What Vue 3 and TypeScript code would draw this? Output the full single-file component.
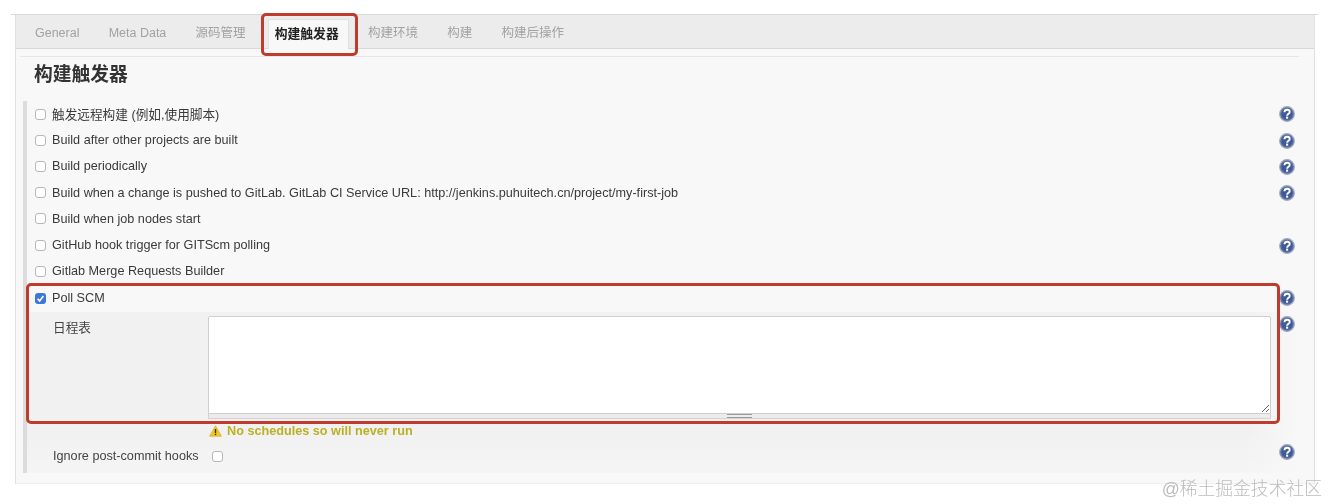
<script setup lang="ts">
interface Row { label: string; help: boolean }
const tabs: string[] = ['General', 'Meta Data', '源码管理', '构建触发器', '构建环境', '构建', '构建后操作']
const activeTab = '构建触发器'
const rows: Row[] = [
  { label: '触发远程构建 (例如,使用脚本)', help: true },
  { label: 'Build after other projects are built', help: true },
  { label: 'Build periodically', help: true },
  { label: 'Build when a change is pushed to GitLab. GitLab CI Service URL: http://jenkins.puhuitech.cn/project/my-first-job', help: true },
  { label: 'Build when job nodes start', help: false },
  { label: 'GitHub hook trigger for GITScm polling', help: true },
  { label: 'Gitlab Merge Requests Builder', help: false }
]
</script>

<template>
  <div class="page">
    <svg class="defs" width="0" height="0" aria-hidden="true">
      <symbol id="help" viewBox="0 0 16 16">
        <circle cx="8" cy="8" r="7.4" fill="#5f74a6" stroke="#a4aec4" stroke-width="1.1" />
        <circle cx="8" cy="8" r="5.6" fill="#3f5a96" />
        <path d="M5.4 6.2c.1-1.5 1.2-2.5 2.7-2.5 1.6 0 2.6 1 2.6 2.2 0 1.9-2.5 1.9-2.6 3.8" fill="none" stroke="#fff" stroke-width="1.9" />
        <rect x="7.05" y="10.6" width="2.1" height="2.1" fill="#fff" />
      </symbol>
    </svg>

    <div class="rule-top"></div>
    <div class="panel">
      <div class="tabbar">
        <div v-for="tab in tabs" :key="tab" class="tab" :class="{ active: tab === activeTab }">{{ tab }}</div>
      </div>
      <div class="tab-rule"></div>
      <h2 class="title">构建触发器</h2>

      <div class="section">
        <div v-for="row in rows" :key="row.label" class="row">
          <label class="check-label"><span class="cb"></span><span class="txt">{{ row.label }}</span></label>
          <svg v-if="row.help" class="help"><use href="#help" /></svg>
        </div>

        <div class="row poll">
          <label class="check-label">
            <span class="cb checked">
              <svg viewBox="0 0 11 11" width="11" height="11"><path d="M2.6 5.8 4.6 8l3.8-5" fill="none" stroke="#fff" stroke-width="1.6" /></svg>
            </span><span class="txt">Poll SCM</span>
          </label>
          <svg class="help"><use href="#help" /></svg>
        </div>

        <div class="nested">
          <div class="field">
            <div class="field-label">日程表</div>
            <div class="control">
              <textarea class="schedule"></textarea>
              <div class="grippie"><span class="grip"></span></div>
              <div class="warning">
                <svg width="13" height="12" viewBox="0 0 13 12">
                  <path d="M6.5.8 12.4 11.2H.6Z" fill="#f1c62c" stroke="#d3b52a" stroke-width=".8" />
                  <path d="M6.5 4v4" stroke="#3a3000" stroke-width="1.4" />
                  <rect x="5.8" y="8.7" width="1.4" height="1.4" fill="#3a3000" />
                </svg>
                <span>No schedules so will never run</span>
              </div>
            </div>
            <svg class="help"><use href="#help" /></svg>
          </div>
          <div class="field ignore">
            <div class="ignore-label">Ignore post-commit hooks</div>
            <div class="control"><span class="cb"></span></div>
            <svg class="help"><use href="#help" /></svg>
          </div>
        </div>
      </div>
    </div>

    <div class="mark mark-tab"></div>
    <div class="mark mark-poll"></div>
    <div class="watermark">@稀土掘金技术社区</div>
  </div>
</template>

<style>
html, body { margin: 0; background: #fff; overflow: hidden; }
</style>

<style scoped>
.page {
  position: relative;
  width: 1328px;
  height: 504px;
  padding-top: 14px;
  box-sizing: border-box;
  font-family: "Liberation Sans", "Noto Sans CJK SC", sans-serif;
  font-size: 12.66px;
  color: #3a3a3a;
  background: #fff;
  filter: blur(0.45px);
}
.defs { position: absolute; }
.rule-top { height: 1px; margin-left: 11px; width: 1307px; background: #d9d9d9; }
.panel {
  margin-left: 15px;
  width: 1300px;
  height: 469px;
  box-sizing: border-box;
  border-left: 1px solid #e0e0e0;
  border-right: 1px solid #e0e0e0;
  border-bottom: 1px solid #f0f0f0;
  background: #f8f8f8;
}
.tabbar {
  display: flex;
  height: 34px;
  box-sizing: border-box;
  padding-left: 4.4px;
  background: #ececec;
  border-bottom: 1px solid #d9d9d9;
  font-size: 12.5px;
}
.tab {
  padding: 0 14.6px;
  line-height: 37px;
  color: #a2a2a2;
  white-space: nowrap;
}
.tab.active {
  margin: 4px 4.4px -1px 8px;
  padding: 0 9.4px 0 5.6px;
  font-size: 12.8px;
  line-height: 27px;
  background: #f8f8f8;
  border: 1px solid #e2e2e2;
  border-bottom: 0;
  font-weight: 700;
  color: #222;
}
.tab-rule { height: 1px; margin: 7px 15px 0 4px; background: #e6e6e6; }
.title {
  margin: 0 0 0 18px;
  height: 44px;
  font-size: 18.8px;
  line-height: 35px;
  font-weight: 700;
  color: #333;
}
.section {
  margin-left: 7px;
  height: 372px;
  border-left: 4px solid #dcdcdc;
}
.row {
  display: flex;
  align-items: center;
  justify-content: space-between;
  height: 26.2px;
  padding-right: 19px;
}
.row .help { margin-top: 1px; }
.row:first-child .help { margin-top: 0; }
.row.poll { height: 27.6px; }
.row.poll .help { margin-top: 0; }
.check-label { display: flex; align-items: center; padding-left: 8px; }
.row:first-child .txt { margin-top: -2px; }
.cb {
  display: inline-flex;
  flex: none;
  width: 11px;
  height: 11px;
  box-sizing: border-box;
  margin-right: 6px;
  border: 1px solid #b8b8b8;
  border-radius: 3px;
  background: #fff;
}
.cb.checked { border: 0; background: #3d78d8; }
.help { flex: none; width: 16px; height: 16px; }
.nested {
  height: 161px;
  padding-top: 4px;
  box-sizing: border-box;
  background:
    linear-gradient(to right, rgba(248, 248, 248, 0) 0, rgba(248, 248, 248, 0) 95%, #f8f8f8 99%),
    linear-gradient(to bottom, #f1f1f1 0, #f1f1f1 75%, #f5f5f5 100%);
}
.field {
  display: flex;
  align-items: flex-start;
  padding-right: 18px;
}
.field-label {
  flex: none;
  width: 155px;
  padding: 4px 0 0 26px;
  line-height: 16px;
  color: #444;
}
.control { flex: none; width: 1063px; margin-right: 8px; }
.schedule {
  display: block;
  width: 100%;
  height: 98px;
  box-sizing: border-box;
  margin: 0;
  border: 1px solid #cfcfcf;
  border-radius: 2px 2px 0 0;
  background: #fff;
  resize: vertical;
  outline: none;
}
.grippie {
  display: flex;
  justify-content: center;
  height: 5px;
  box-sizing: border-box;
  background: #ececec;
  border: 1px solid #d2d2d2;
  border-top: 0;
}
.grip {
  width: 25px;
  height: 4px;
  box-sizing: border-box;
  border-top: 1px solid #9a9a9a;
  border-bottom: 1px solid #9a9a9a;
}
.warning {
  display: flex;
  align-items: center;
  gap: 5px;
  height: 16px;
  margin-top: 4px;
  padding-left: 1px;
  font-weight: 700;
  color: #bcb026;
}
.field.ignore { margin-top: 3px; }
.ignore-label {
  flex: none;
  width: 181px;
  box-sizing: border-box;
  padding: 6px 0 0 26px;
  line-height: 16px;
  white-space: nowrap;
  color: #444;
}
.ignore .control .cb { margin: 9px 0 0 4px; }
.ignore .help { margin-top: 2px; }
.mark {
  position: absolute;
  box-sizing: border-box;
  border: 3px solid #bf3b2e;
  border-radius: 5px;
  pointer-events: none;
}
.mark-tab { left: 261px; top: 13px; width: 97px; height: 43px; }
.mark-poll { left: 26px; top: 283px; width: 1254px; height: 141px; }
.watermark {
  position: absolute;
  right: 6px;
  top: 478px;
  font-size: 17.8px;
  line-height: 22px;
  font-weight: 300;
  color: #bcbcbc;
  white-space: nowrap;
}
</style>
